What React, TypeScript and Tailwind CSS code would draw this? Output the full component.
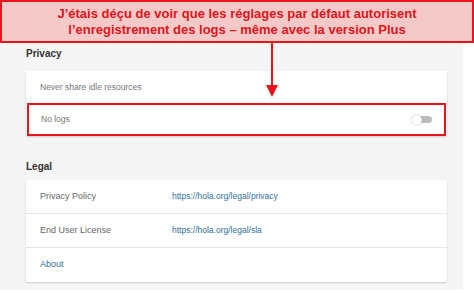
const legalRows = [
  { label: "Privacy Policy", href: "https://hola.org/legal/privacy" },
  { label: "End User License", href: "https://hola.org/legal/sla" },
];

export default function App() {
  return (
    <main
      className="relative w-[474px] h-[293px] overflow-hidden bg-white"
      style={{ fontFamily: '"Liberation Sans", Arial, sans-serif' }}
    >
      <div className="h-[43px] border-2 border-[#e8141b] bg-[#f6c9c9] flex flex-col items-center justify-center text-[13px] leading-[16px] font-bold text-[#e0141b]">
        <p>J’étais déçu de voir que les réglages par défaut autorisent</p>
        <p>l’enregistrement des logs – même avec la version Plus</p>
      </div>

      <div className="w-[463px] h-[247px] bg-[#f5f5f5] pl-[26px] pt-[3px]">
        <h2 className="h-[14px] mb-[11px] flex items-center text-[10px] font-bold text-[#333]">
          Privacy
        </h2>
        <div className="w-[421px] bg-white rounded-[2px] shadow-[0_1px_2px_rgba(0,0,0,0.18)]">
          <div className="h-[32px] flex items-center pl-[14px] text-[8.5px] text-[#777]">
            Never share idle resources
          </div>
          <div className="h-[33px] mx-[1px] border-2 border-[#e8141b] flex items-center justify-between pl-[12px] pr-[12px] text-[8.5px] text-[#777]">
            <span>No logs</span>
            <span className="relative w-[20px] h-[10px] flex items-center">
              <span className="absolute left-[3px] right-0 h-[7px] rounded-full bg-[#bdbdbd]" />
              <span className="absolute left-0 w-[10px] h-[10px] rounded-full bg-white shadow-[0_0_2px_rgba(0,0,0,0.35)]" />
            </span>
          </div>
        </div>

        <h2 className="h-[44px] pt-[16px] flex items-center text-[10px] font-bold text-[#333]">
          Legal
        </h2>
        <div className="w-[421px] bg-white rounded-[2px] shadow-[0_1px_2px_rgba(0,0,0,0.18)]">
          {legalRows.map((row) => (
            <div
              key={row.label}
              className="h-[34px] flex items-center pl-[14px] border-b border-[#e6e6e6] text-[9px]"
            >
              <span className="w-[132px] text-[#666]">{row.label}</span>
              <a className="text-[8.5px] text-[#2f6f9e]">{row.href}</a>
            </div>
          ))}
          <div className="h-[34px] flex items-center pl-[14px] text-[9px] text-[#2f6f9e]">
            About
          </div>
        </div>
      </div>

      {/* red callout arrow */}
      <div className="absolute left-[266px] top-[42px] flex flex-col items-center">
        <div className="w-[2px] h-[44px] bg-[#e8141b]" />
        <svg width="12" height="12" viewBox="0 0 12 12" className="-mt-[1px]">
          <polygon points="0,0 12,0 6,12" fill="#e8141b" />
        </svg>
      </div>
    </main>
  );
}
